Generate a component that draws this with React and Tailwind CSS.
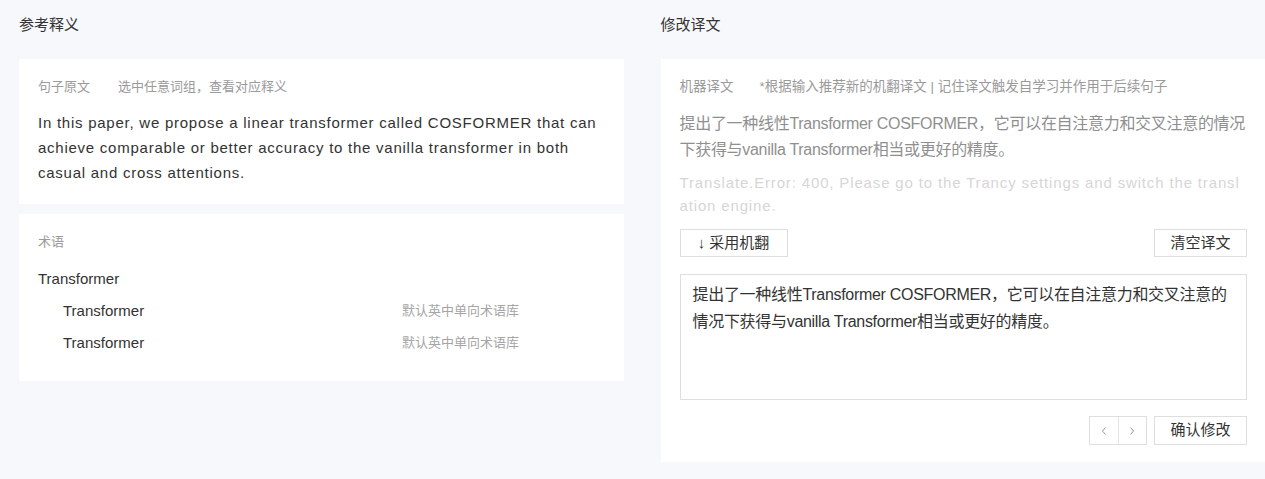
export default function App() {
  const font = { fontFamily: '"Liberation Sans", "Noto Sans CJK SC", sans-serif' };
  return (
    <div
      className="min-h-[479px] w-[1265px] bg-[#f7f8fc] flex gap-[37px] pl-[19px] text-[#333]"
      style={font}
    >
      {/* 参考释义 */}
      <section className="flex-1 flex flex-col">
        <div className="h-[50px] flex items-center text-[15px]">参考释义</div>
        <div className="mt-[9px] bg-white px-[19px] pt-[18px] pb-[19px]">
          <div className="flex text-[13px] text-[#9a9a9a] leading-[20px]">
            <span className="w-[80px]">句子原文</span>
            <span>选中任意词组，查看对应释义</span>
          </div>
          <p className="mt-[13px] text-[15px] leading-[25px] tracking-[0.75px]">
            In this paper, we propose a linear transformer called COSFORMER that can achieve comparable or better
            accuracy to the vanilla transformer in both casual and cross attentions.
          </p>
        </div>
        <div className="mt-[10px] bg-white px-[19px] pt-[18px] pb-[26px]">
          <div className="text-[13px] text-[#9a9a9a] leading-[20px]">术语</div>
          <div className="mt-[14px] text-[15px] leading-[25px]">Transformer</div>
          <div className="mt-[7px] flex flex-col gap-[7px] pl-[25px]">
            {[0, 1].map((i) => (
              <div key={i} className="flex items-center leading-[25px]">
                <span className="w-[339px] text-[15px]">Transformer</span>
                <span className="text-[13px] text-[#a5a5a5]">默认英中单向术语库</span>
              </div>
            ))}
          </div>
        </div>
      </section>

      {/* 修改译文 */}
      <section className="flex-1 flex flex-col">
        <div className="h-[50px] flex items-center text-[15px]">修改译文</div>
        <div className="mt-[9px] bg-white pl-[19px] pr-[18px] pt-[18px] pb-[17px]">
          <div className="flex text-[13.5px] text-[#9a9a9a] leading-[20px]">
            <span className="w-[80px]">机器译文</span>
            <span>*根据输入推荐新的机翻译文 | 记住译文触发自学习并作用于后续句子</span>
          </div>
          <p className="mt-[14px] text-[16px] leading-[26px] text-[#8f8f8f] tracking-[-0.3px]">
            提出了一种线性Transformer COSFORMER，它可以在自注意力和交叉注意的情况下获得与vanilla Transformer相当或更好的精度。
          </p>
          <p className="mt-[8px] text-[15px] leading-[23px] text-[#d6d6d6] break-all tracking-[0.85px]">
            Translate.Error: 400, Please go to the Trancy settings and switch the translation engine.
          </p>
          <div className="mt-[12px] flex justify-between">
            <button className="h-[28px] w-[108px] border border-[#dedede] bg-white text-[15px] flex items-center justify-center gap-[4px]">
              <span>↓</span>
              <span>采用机翻</span>
            </button>
            <button className="h-[28px] w-[93px] border border-[#dedede] bg-white text-[15px]">清空译文</button>
          </div>
          <div className="mt-[17px] h-[126px] border border-[#dedede] px-[12px] py-[6px] text-[16px] leading-[27px] tracking-[-0.3px]">
            提出了一种线性Transformer COSFORMER，它可以在自注意力和交叉注意的情况下获得与vanilla Transformer相当或更好的精度。
          </div>
          <div className="mt-[16px] flex justify-end gap-[7px]">
            <div className="h-[29px] w-[58px] border border-[#dedede] flex">
              <button className="flex-1 flex items-center justify-center">
                <svg width="8" height="12" viewBox="0 0 8 12" fill="none" stroke="#999" strokeWidth="1">
                  <path d="M5.5 2.5L2.5 6l3 3.5" />
                </svg>
              </button>
              <div className="w-px bg-[#e3e3e3]" />
              <button className="flex-1 flex items-center justify-center">
                <svg width="8" height="12" viewBox="0 0 8 12" fill="none" stroke="#999" strokeWidth="1">
                  <path d="M2.5 2.5L5.5 6l-3 3.5" />
                </svg>
              </button>
            </div>
            <button className="h-[29px] w-[93px] border border-[#dedede] bg-white text-[15px]">确认修改</button>
          </div>
        </div>
      </section>
    </div>
  );
}
